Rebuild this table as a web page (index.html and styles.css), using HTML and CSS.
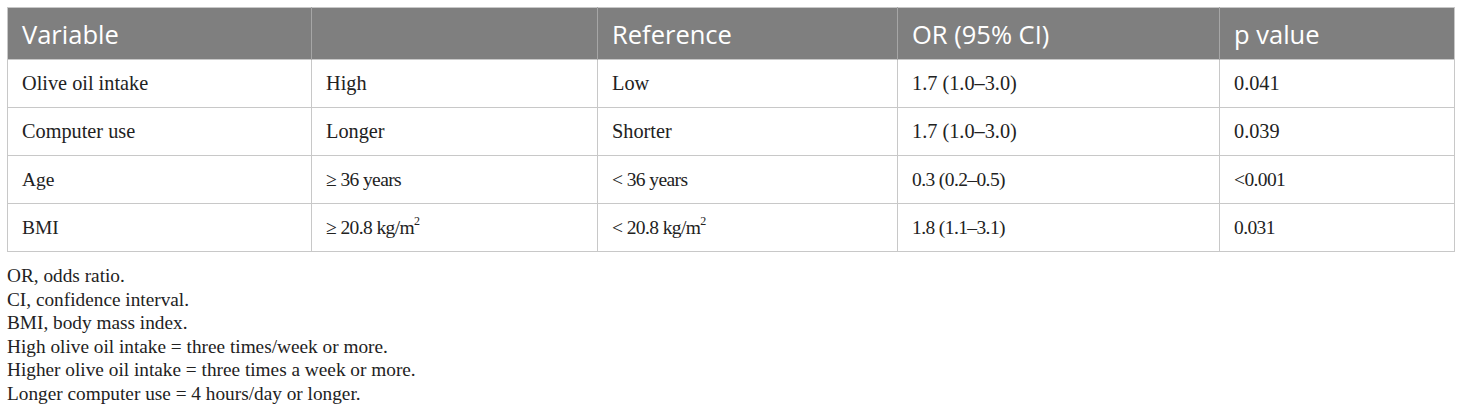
FILE: index.html
```html
<!DOCTYPE html>
<html lang="en">
<head>
<meta charset="utf-8">
<title>Table</title>
<link rel="stylesheet" href="styles.css">
</head>
<body>
<div class="wrap">
<table class="data">
  <colgroup>
    <col class="c1"><col class="c2"><col class="c3"><col class="c4"><col class="c5">
  </colgroup>
  <thead>
    <tr><th>Variable</th><th></th><th>Reference</th><th>OR (95% CI)</th><th>p value</th></tr>
  </thead>
  <tbody>
    <tr><td>Olive oil intake</td><td>High</td><td>Low</td><td>1.7 (1.0–3.0)</td><td>0.041</td></tr>
    <tr><td>Computer use</td><td>Longer</td><td>Shorter</td><td>1.7 (1.0–3.0)</td><td>0.039</td></tr>
    <tr class="narrow"><td class="wide">Age</td><td>≥ 36 years</td><td>&lt; 36 years</td><td>0.3 (0.2–0.5)</td><td>&lt;0.001</td></tr>
    <tr class="narrow"><td class="wide">BMI</td><td>≥ 20.8 kg/m<sup>2</sup></td><td>&lt; 20.8 kg/m<sup>2</sup></td><td>1.8 (1.1–3.1)</td><td>0.031</td></tr>
  </tbody>
</table>
<div class="notes">
  <p>OR, odds ratio.</p>
  <p>CI, confidence interval.</p>
  <p>BMI, body mass index.</p>
  <p>High olive oil intake = three times/week or more.</p>
  <p>Higher olive oil intake = three times a week or more.</p>
  <p>Longer computer use = 4 hours/day or longer.</p>
</div>
</div>
</body>
</html>
```

FILE: styles.css
```css
html, body {
  margin: 0;
  padding: 0;
  background: #ffffff;
}
.wrap {
  padding: 7px 0 0 7px;
}
.data {
  border-collapse: collapse;
  width: 1447px;
  table-layout: fixed;
  border: 1px solid #c8c8c8;
}
.c1 { width: 304px; }
.c2 { width: 286px; }
.c3 { width: 300px; }
.c4 { width: 322px; }
.c5 { width: 235px; }
.data th {
  background: #7f7f7f;
  color: #ffffff;
  font-family: "Open Sans", "Noto Sans", sans-serif;
  font-weight: 400;
  font-size: 25.5px;
  text-align: left;
  height: 52px;
  padding: 0 14px;
  box-sizing: border-box;
  border-left: 1px solid #a6a6a6;
  vertical-align: middle;
}
.data th:first-child { border-left: none; }
.data td {
  font-family: "Liberation Serif", "Times New Roman", serif;
  font-size: 20.3px;
  color: #222222;
  height: 48px;
  padding: 0 14px;
  box-sizing: border-box;
  border: 1px solid #c8c8c8;
  vertical-align: middle;
}
.data tr.narrow td {
  font-size: 19.5px;
  letter-spacing: -0.6px;
}
.data tr.narrow td.wide {
  letter-spacing: 0;
}
.data sup {
  font-size: 12px;
  line-height: 0;
  vertical-align: 9px;
  letter-spacing: 0;
}
.notes {
  font-family: "Liberation Serif", "Times New Roman", serif;
  font-size: 19.3px;
  color: #222222;
  padding-top: 12px;
}
.notes p {
  margin: 0;
  line-height: 23.6px;
}
```
